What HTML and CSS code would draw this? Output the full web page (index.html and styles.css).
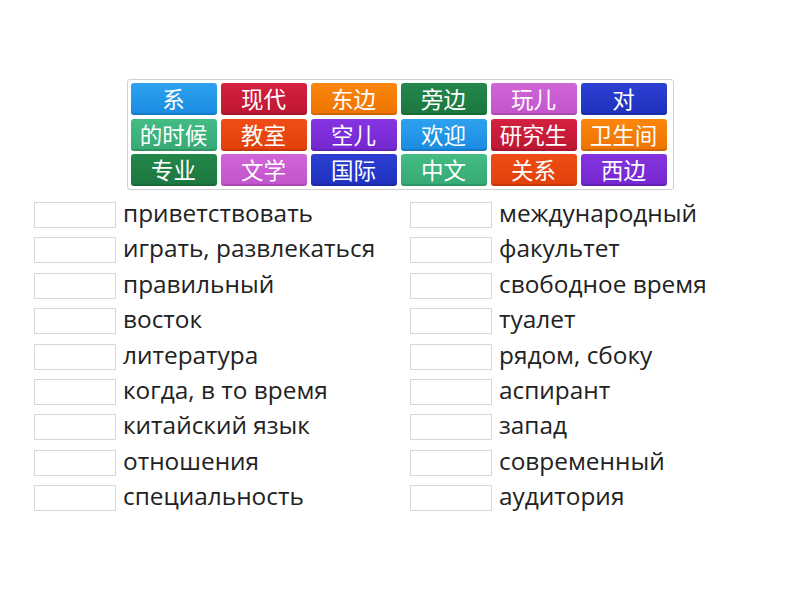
FILE: index.html
```html
<!DOCTYPE html>
<html lang="ru">
<head>
    <meta charset="UTF-8">
    <title>Match up</title>
    <link rel="stylesheet" href="styles.css">
</head>
<body>
    <div class="page">
        <div class="tiles">
            <div class="tile blue">系</div>
            <div class="tile crimson">现代</div>
            <div class="tile orange">东边</div>
            <div class="tile green">旁边</div>
            <div class="tile orchid">玩儿</div>
            <div class="tile navy">对</div>

            <div class="tile sea">的时候</div>
            <div class="tile red">教室</div>
            <div class="tile purple">空儿</div>
            <div class="tile blue">欢迎</div>
            <div class="tile crimson">研究生</div>
            <div class="tile orange">卫生间</div>

            <div class="tile green">专业</div>
            <div class="tile orchid">文学</div>
            <div class="tile navy">国际</div>
            <div class="tile sea">中文</div>
            <div class="tile red">关系</div>
            <div class="tile purple">西边</div>
        </div>

        <div class="answers">
            <div class="row"><span class="slot"></span><span class="word">приветствовать</span></div>
            <div class="row"><span class="slot"></span><span class="word">международный</span></div>
            <div class="row"><span class="slot"></span><span class="word">играть, развлекаться</span></div>
            <div class="row"><span class="slot"></span><span class="word">факультет</span></div>
            <div class="row"><span class="slot"></span><span class="word">правильный</span></div>
            <div class="row"><span class="slot"></span><span class="word">свободное время</span></div>
            <div class="row"><span class="slot"></span><span class="word">восток</span></div>
            <div class="row"><span class="slot"></span><span class="word">туалет</span></div>
            <div class="row"><span class="slot"></span><span class="word">литература</span></div>
            <div class="row"><span class="slot"></span><span class="word">рядом, сбоку</span></div>
            <div class="row"><span class="slot"></span><span class="word">когда, в то время</span></div>
            <div class="row"><span class="slot"></span><span class="word">аспирант</span></div>
            <div class="row"><span class="slot"></span><span class="word">китайский язык</span></div>
            <div class="row"><span class="slot"></span><span class="word">запад</span></div>
            <div class="row"><span class="slot"></span><span class="word">отношения</span></div>
            <div class="row"><span class="slot"></span><span class="word">современный</span></div>
            <div class="row"><span class="slot"></span><span class="word">специальность</span></div>
            <div class="row"><span class="slot"></span><span class="word">аудитория</span></div>
        </div>
    </div>
</body>
</html>
```

FILE: styles.css
```css
body {
    margin: 0;
    background-color: #fff;
    font-family: "Open Sans", "Noto Sans CJK SC", sans-serif;
    color: #222;
}

.page {
    width: 800px;
    height: 600px;
    padding-top: 79px;
    box-sizing: border-box;
}

.tiles {
    width: 539px;
    margin: 0 auto;
    padding: 3px;
    border: 1px solid #d0d0d0;
    border-radius: 3px;
    display: grid;
    grid-template-columns: repeat(6, 86px);
    gap: 3.5px 4px;
}

.tile {
    height: 32px;
    border-radius: 3px;
    color: #fff;
    font-family: "Noto Sans CJK SC", sans-serif;
    font-size: 22.5px;
    line-height: 31px;
    text-align: center;
    box-shadow: inset 0 -2px 0 rgba(0, 0, 0, 0.12);
}

.blue    { background: linear-gradient(#2ea2f0, #1a8ae0); }
.crimson { background: linear-gradient(#d4213f, #bd1634); }
.orange  { background: linear-gradient(#fb860e, #ee7300); }
.green   { background: linear-gradient(#24874b, #1b773f); }
.orchid  { background: linear-gradient(#d065d8, #c253cc); }
.navy    { background: linear-gradient(#2c40d2, #1f30bd); }
.sea     { background: linear-gradient(#44bc84, #36a974); }
.red     { background: linear-gradient(#f04d16, #e0400a); }
.purple  { background: linear-gradient(#8535e0, #7426cf); }

.answers {
    margin: 12px 0 0 34px;
    display: grid;
    grid-template-columns: 376px 376px;
    row-gap: 9.4px;
}

.row {
    display: flex;
    align-items: flex-start;
    height: 26px;
}

.slot {
    width: 80px;
    height: 24px;
    border: 1px solid #d8d8d8;
    flex-shrink: 0;
}

.word {
    margin-left: 7px;
    font-size: 24.4px;
    line-height: 21px;
    white-space: nowrap;
}
```
